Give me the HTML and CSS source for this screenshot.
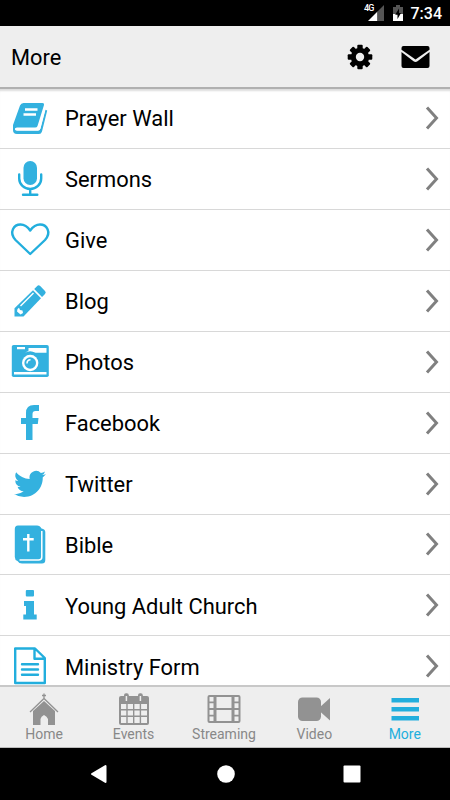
FILE: index.html
```
<!DOCTYPE html>
<html lang="en">
<head>
    <meta charset="UTF-8">
    <meta name="viewport" content="width=device-width, initial-scale=1.0">
    <title>More</title>
    <link rel="stylesheet" href="styles.css">
</head>
<body>

<div class="status-bar">
    <svg class="signal" width="22" height="18" viewBox="0 0 22 18">
        <path d="M13.500 6.500V16H4z" fill="#fff"/>
        <path d="M13.500 6.500L20 0V16H13.500z" fill="#555"/>
    </svg>
    <span class="network">4G</span>
    <svg class="battery" width="10" height="16" viewBox="0 0 10 16">
        <path d="M0 2H3V0H7V2H10V9H0z" fill="#555"/>
        <path d="M0 9H10V16H0z" fill="#fff"/>
        <path d="M6 3.500L2.200 9.800H4.500V14L8 8H6z" fill="#000"/>
    </svg>
    <span class="time">7:34</span>
</div>

<div class="header">
    <h1>More</h1>
    <div class="header-icons">
        <svg width="26" height="26" viewBox="-13 -13 26 26">
            <g id="teeth">
                <rect x="-2.700" y="-12.300" width="5.400" height="24.600" rx="1"/>
                <rect x="-12.300" y="-2.700" width="24.600" height="5.400" rx="1"/>
            </g>
            <use href="#teeth" transform="rotate(45)"/>
            <circle r="9.200"/>
            <circle r="4.200" fill="#eee"/>
        </svg>
        <svg width="29" height="24" viewBox="0 0 29 24">
            <path d="M2.500 1H26.500Q28.500 1 28.500 3V4.800L14.500 14.600L.5 4.800V3Q.5 1 2.500 1z"/>
            <path d="M.5 7L12.500 16.200Q14.500 17.600 16.500 16.200L28.500 7V21Q28.500 23 26.500 23H2.500Q.5 23 .5 21z"/>
        </svg>
    </div>
</div>

<div class="list">
    <div class="row">
        <svg class="icon" viewBox="0 0 60 60">
            <path d="M23.500 14H42.500Q44.500 14 44 16L37.500 37Q37 38.500 35 38.500H17Q15 38.500 15 40Q15.200 41.300 17 41.300H38.500Q40 41.300 40.500 39.500L45.500 20.800L47.200 21.500L42 42.500Q41.200 45 39 45H17Q13 45 13 41V36L20 16.500Q21 14 23.500 14z"/>
            <path class="cut" d="M16 39H37Q38 39 38.400 37.500L43.500 20L45.200 20.800L40.300 39.700Q39.900 41.700 38 41.700H17Q15 41.700 15 40.300Q15 39.300 16 39z"/>
            <path class="cut-line" d="M25 20.500H37.500M23.500 25.500H36"/>
        </svg>
        <span class="label">Prayer Wall</span>
        <svg class="arrow" viewBox="0 0 14 24"><path d="M2 1.500L11.500 12L2 22.500"/></svg>
    </div>
    <div class="row">
        <svg class="icon" viewBox="0 0 60 60">
            <rect x="23.500" y="12" width="13.500" height="24" rx="6.700"/>
            <path class="line" d="M19.200 25.500V29.500A11 10.500 0 0 0 41.200 29.500V25.500M30.200 40V45.500M23 45.700H37.300"/>
        </svg>
        <span class="label">Sermons</span>
        <svg class="arrow" viewBox="0 0 14 24"><path d="M2 1.500L11.500 12L2 22.500"/></svg>
    </div>
    <div class="row">
        <svg class="icon" viewBox="0 0 60 60">
            <path class="line" d="M30.200 44L15.500 30C8.500 22 14 14.500 20.500 14.500Q26 14.500 30.200 20.500Q34.500 14.500 40 14.500C46.500 14.500 52 22 45 30z"/>
        </svg>
        <span class="label">Give</span>
        <svg class="arrow" viewBox="0 0 14 24"><path d="M2 1.500L11.500 12L2 22.500"/></svg>
    </div>
    <div class="row">
        <svg class="icon" viewBox="0 0 60 60">
            <path d="M34.200 18L37.200 15Q38.500 13.500 40.200 15L45 20Q46.500 21.500 45 23L42 26z"/>
            <path d="M33 19.200L41 27.200L23.500 45.500H14.500V37.200z"/>
            <path class="cut" d="M17.500 38L19 36.800L20 39L22.500 39.500L23 42L20.500 43.500L17 40.500z"/>
            <path class="cut-thin" d="M20.500 35L33.500 22"/>
        </svg>
        <span class="label">Blog</span>
        <svg class="arrow" viewBox="0 0 14 24"><path d="M2 1.500L11.500 12L2 22.500"/></svg>
    </div>
    <div class="row">
        <svg class="icon" viewBox="0 0 60 60">
            <rect x="11.800" y="13" width="37" height="32" rx="1.800"/>
            <path class="cut" d="M14 20.800H25L28.500 18.800V16H46.500V20.800H35.500Q30 17.800 25 20.800zM17 15H25V17.300H17zM14 40H46.500V42.500H14z"/>
            <circle class="cut" cx="30.200" cy="31" r="8.200"/>
            <circle cx="30.200" cy="31" r="5.800"/>
            <path class="cut-thin" d="M27 31.500Q27 28 30.500 27.800"/>
        </svg>
        <span class="label">Photos</span>
        <svg class="arrow" viewBox="0 0 14 24"><path d="M2 1.500L11.500 12L2 22.500"/></svg>
    </div>
    <div class="row">
        <svg class="icon" viewBox="0 0 60 60">
            <path d="M39 12V18H35.500Q32.500 18 32.500 21V25H38.500L37.800 31H32.500V47H26V31H21V25H26V20Q26 12 34 12z"/>
        </svg>
        <span class="label">Facebook</span>
        <svg class="arrow" viewBox="0 0 14 24"><path d="M2 1.500L11.500 12L2 22.500"/></svg>
    </div>
    <div class="row">
        <svg class="icon twitter" viewBox="0 0 24 24">
            <path d="M23.950 4.570a10 10 0 0 1-2.820.77 4.960 4.960 0 0 0 2.160-2.720c-.95.550-2 .950-3.130 1.180a4.920 4.920 0 0 0-8.380 4.480C7.690 8.090 4.070 6.130 1.640 3.160a4.920 4.920 0 0 0 1.520 6.570 4.900 4.900 0 0 1-2.230-.61v.06a4.920 4.920 0 0 0 3.950 4.830 5 5 0 0 1-2.210.08 4.930 4.930 0 0 0 4.600 3.420A9.870 9.870 0 0 1 0 19.540a13.990 13.990 0 0 0 7.550 2.210c9.050 0 14-7.500 14-13.980 0-.21 0-.42-.02-.63a9.940 9.940 0 0 0 2.420-2.570z"/>
        </svg>
        <span class="label">Twitter</span>
        <svg class="arrow" viewBox="0 0 14 24"><path d="M2 1.500L11.500 12L2 22.500"/></svg>
    </div>
    <div class="row">
        <svg class="icon" viewBox="0 0 60 60">
            <path d="M18 10.500H37Q40 10.500 41.500 13.500Q45.300 14 45.300 17V45Q45.300 48.500 42 48.500H22Q19 48.500 17.500 46Q14.800 45 14.800 42V14Q14.800 10.500 18 10.500z"/>
            <path class="cut-thin" d="M41.800 16V42Q41.800 45 38.500 45H19.500"/>
            <path class="cut-line" d="M28.300 19V36.500M23 24.300H33.700"/>
        </svg>
        <span class="label">Bible</span>
        <svg class="arrow" viewBox="0 0 14 24"><path d="M2 1.500L11.500 12L2 22.500"/></svg>
    </div>
    <div class="row">
        <svg class="icon" viewBox="0 0 60 60">
            <rect x="25.800" y="15" width="8.200" height="6.500" rx="1"/>
            <path d="M24 26H34V39.500H36.700V44.500H23.300V39.500H26V31H24z"/>
        </svg>
        <span class="label">Young Adult Church</span>
        <svg class="arrow" viewBox="0 0 14 24"><path d="M2 1.500L11.500 12L2 22.500"/></svg>
    </div>
    <div class="row">
        <svg class="icon" viewBox="0 0 60 60">
            <path class="line" d="M15.200 12.500H35L44.800 22V47H15.200zM34.500 12.500V22.700H44.800M22 28.300H38M22 33.500H38M22 38.800H38"/>
        </svg>
        <span class="label">Ministry Form</span>
        <svg class="arrow" viewBox="0 0 14 24"><path d="M2 1.500L11.500 12L2 22.500"/></svg>
    </div>
</div>

<div class="tab-bar">
    <div class="tab">
        <svg width="34" height="34" viewBox="0 0 34 34">
            <path d="M17 9L28 19V33H21V27Q20 24.500 17 23Q14 24.500 13.500 27V33H6V19z"/>
            <path class="tab-line" d="M3 20L17 6.500L31 20M17 7V1.500M15 3.500H19"/>
        </svg>
        <span>Home</span>
    </div>
    <div class="tab">
        <svg width="34" height="34" viewBox="0 0 34 34">
            <path d="M4 4H30Q32 4 32 6V31Q32 33 30 33H4Q2 33 2 31V6Q2 4 4 4z"/>
            <path class="tab-cut" d="M4 12H9.300V17H4zM10.700 12H16V17H10.700zM17.400 12H22.700V17H17.400zM24.100 12H30V17H24.100zM4 18.400H9.300V23.600H4zM10.700 18.400H16V23.600H10.700zM17.400 18.400H22.700V23.600H17.400zM24.100 18.400H30V23.600H24.100zM4 25H9.300V31H4zM10.700 25H16V31H10.700zM17.400 25H22.700V31H17.400zM24.100 25H30V31H24.100z"/>
            <rect x="7" y="1.300" width="4.800" height="9" rx="2"/>
            <rect x="21" y="1.300" width="4.800" height="9" rx="2"/>
            <path class="tab-slot" d="M9.400 4V9M23.400 4V9"/>
        </svg>
        <span>Events</span>
    </div>
    <div class="tab">
        <svg width="34" height="34" viewBox="0 0 34 34">
            <rect x=".5" y="3" width="33" height="28" rx="2"/>
            <path class="tab-cut" d="M9.500 5H24.500V16H9.500zM9.500 18H24.500V29H9.500zM2.500 5H6.500V9.500H2.500zM2.500 11.300H6.500V16H2.500zM2.500 18H6.500V22.700H2.500zM2.500 24.500H6.500V29H2.500zM27.500 5H31.500V9.500H27.500zM27.500 11.300H31.500V16H27.500zM27.500 18H31.500V22.700H27.500zM27.500 24.500H31.500V29H27.500z"/>
        </svg>
        <span>Streaming</span>
    </div>
    <div class="tab">
        <svg width="34" height="34" viewBox="0 0 34 34">
            <rect x="1" y="5.500" width="23" height="23.500" rx="4.500"/>
            <path d="M23 15L33 6V28.500L23 19.500z"/>
        </svg>
        <span>Video</span>
    </div>
    <div class="tab active">
        <svg width="34" height="34" viewBox="0 0 34 34">
            <path d="M3.500 6H31V10.500H3.500zM3.500 15H31V19.500H3.500zM3.500 24H31V28.500H3.500z"/>
        </svg>
        <span>More</span>
    </div>
</div>

<div class="nav-bar">
    <svg width="18" height="20" viewBox="0 0 18 20"><path d="M15.500 2V18L2 10z" stroke="#fff" stroke-width="2" stroke-linejoin="round"/></svg>
    <svg width="18" height="18" viewBox="0 0 18 18"><circle cx="9" cy="9" r="8.800"/></svg>
    <svg width="18" height="18" viewBox="0 0 18 18"><rect x=".5" y=".5" width="17" height="17" rx="1"/></svg>
</div>

</body>
</html>
```
FILE: styles.css
```
* {
    margin: 0;
    padding: 0;
    box-sizing: border-box;
}

body {
    display: flex;
    flex-direction: column;
    width: 450px;
    height: 800px;
    overflow: hidden;
    background-color: #fff;
    font-family: Roboto, sans-serif;
    color: #000;
}

svg {
    display: block;
    flex-shrink: 0;
}

.status-bar {
    position: relative;
    display: flex;
    justify-content: flex-end;
    align-items: center;
    height: 26px;
    padding-right: 8px;
    background-color: #000;
    color: #fff;
}

.signal {
    margin-top: 2px;
    margin-right: 7px;
}

/* sits over the corner of the signal triangle */
.network {
    position: absolute;
    top: 3px;
    left: 364px;
    font-size: 9px;
    font-weight: 500;
    line-height: 11px;
    letter-spacing: -0.8px;
}

.battery {
    margin-right: 8px;
}

.time {
    font-size: 16px;
    font-weight: 500;
    line-height: 26px;
    padding-top: 2px;
}

.header {
    display: flex;
    justify-content: space-between;
    align-items: center;
    height: 61px;
    padding: 0 20px 0 11px;
    background-color: #eee;
}

.header h1 {
    font-size: 21.8px;
    font-weight: 400;
    padding-top: 1px;
}

.header-icons {
    display: flex;
    align-items: center;
    gap: 28px;
}

.list {
    height: 598px;
    overflow: hidden;
    border-top: 2px solid #b0b0b0;
    box-shadow: inset 0 3px 2px -1px #ddd;
}

.row {
    display: flex;
    align-items: center;
    height: 60.93px;
    padding-right: 11px;
    border-bottom: 1px solid #d8d8d8;
}

.row:first-child {
    height: 60px;
}

.icon {
    width: 60px;
    height: 60px;
    fill: #33b1df;
}

.twitter {
    width: 32px;
    height: 32px;
    margin: 0 14px;
}

.line {
    fill: none;
    stroke: #22aedd;
    stroke-width: 2.4;
    stroke-linejoin: round;
    stroke-linecap: round;
}

.cut {
    fill: #fff;
}

.cut-line {
    fill: none;
    stroke: #fff;
    stroke-width: 2.4;
}

.cut-thin {
    fill: none;
    stroke: #fff;
    stroke-width: 1.5;
}

.label {
    flex: 1;
    padding: 3px 0 0 5px;
    font-size: 21.9px;
    line-height: 30px;
}

.row:first-child .label {
    padding-top: 0;
}

.arrow {
    width: 14px;
    height: 24px;
    fill: none;
    stroke: #808080;
    stroke-width: 3;
}

.row:first-child .arrow {
    margin-bottom: 2px;
}

.tab-bar {
    display: flex;
    height: 63px;
    background-color: #eee;
    border-top: 2px solid #c8c8c8;
    border-bottom: 1px solid #bbb;
}

.tab {
    display: flex;
    flex-direction: column;
    align-items: center;
    width: 90.4px;
    padding-top: 5px;
    fill: #929292;
    color: #888;
    font-size: 14px;
    line-height: 16px;
}

.tab:first-child {
    width: 88.4px;
}

.tab.active {
    fill: #22aedd;
    color: #22aedd;
}

.tab-line {
    fill: none;
    stroke: #929292;
    stroke-width: 1.3;
}

.tab-cut {
    fill: #eee;
}

.tab-slot {
    stroke: #eee;
    stroke-width: 1.5;
}

.nav-bar {
    display: flex;
    justify-content: space-between;
    align-items: center;
    height: 52px;
    padding: 0 89px 0 90px;
    background-color: #000;
    fill: #fff;
}
```
